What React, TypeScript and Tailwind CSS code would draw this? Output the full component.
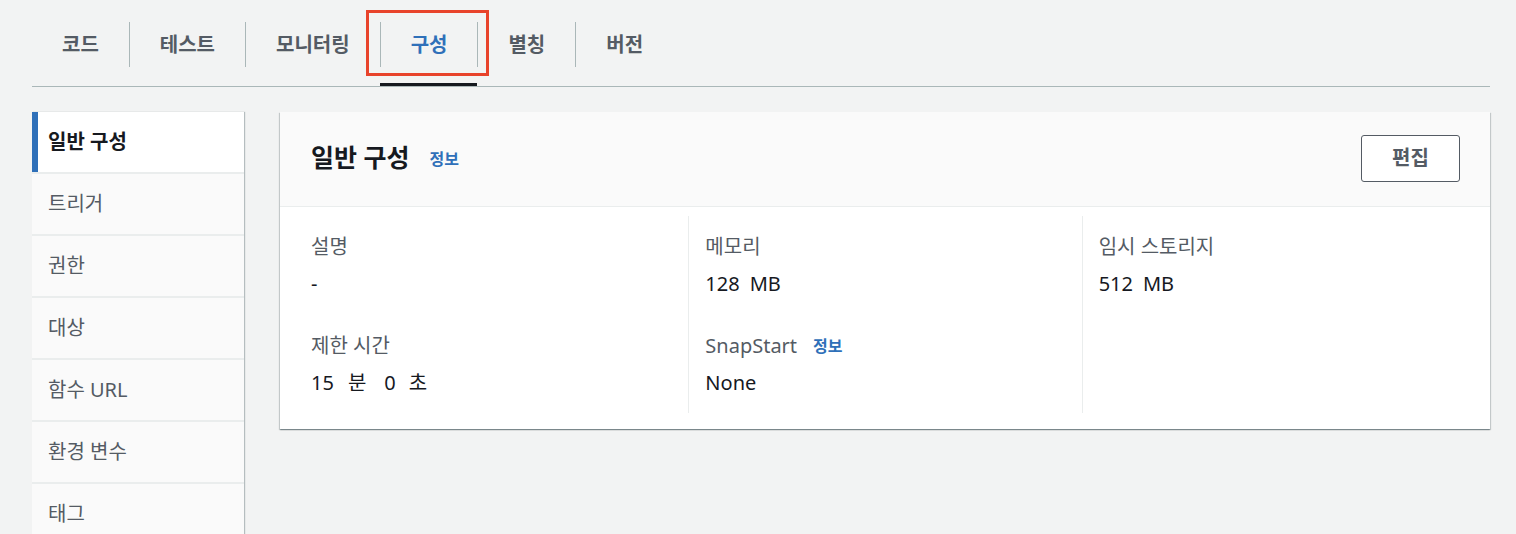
import React from 'react'

const tabs = ['코드', '테스트', '모니터링', '구성', '별칭', '버전']
const sideItems = ['일반 구성', '트리거', '권한', '대상', '함수 URL', '환경 변수', '태그']

function InfoLink({ className = '' }: { className?: string }) {
  return <span className={`text-[16px] font-bold text-[#2f70b9] ${className}`}>정보</span>
}

function Field({ label, children, info }: { label: string; children: React.ReactNode; info?: boolean }) {
  return (
    <div className="flex flex-col">
      <div className="flex items-center h-[24px] text-[20px] text-[#545b64]">
        {label}
        {info && <InfoLink className="ml-[16px]" />}
      </div>
      <div className="mt-[13px] h-[24px] flex items-center text-[20px] text-[#16191f]">{children}</div>
    </div>
  )
}

export default function App() {
  return (
    <div className="min-h-[534px] bg-[#f2f3f3] font-['Noto_Sans','Noto_Sans_CJK_KR',sans-serif] overflow-hidden">
      {/* tabs */}
      <div className="ml-[32px] mr-[26px] flex border-b border-[#aab7b8] h-[87px]">
        {tabs.map((t, i) => {
          const active = t === '구성'
          return (
            <div
              key={t}
              className={`relative h-[86px] pt-[6px] flex items-center border-b-[3px] ${active ? 'border-[#16191f]' : 'border-transparent'}`}
            >
              <div
                className={`h-[45px] flex items-center px-[30px] text-[20px] font-bold ${i > 0 ? 'border-l border-[#aab7b8]' : ''} ${active ? 'text-[#2f70b9]' : 'text-[#545b64]'}`}
              >
                {t}
              </div>
              {active && (
                <div className="absolute left-[-14px] right-[-12px] top-[10px] h-[66px] border-[3px] border-[#e8432b] pointer-events-none" />
              )}
            </div>
          )
        })}
      </div>

      <div className="flex mt-[25px] ml-[32px] mr-[26px] gap-[36px] items-start">
        {/* side nav */}
        <div className="w-[212px] shrink-0 flex flex-col gap-[2px] bg-[#eaeded] shadow-[1px_0_1px_0_rgba(0,28,36,0.25)]">
          {sideItems.map((s, i) => (
            <div
              key={s}
              className={`h-[60px] flex items-center text-[20px] ${i === 0 ? 'bg-white font-bold text-[#16191f] border-l-[6px] border-[#2f70b9] pl-[10px]' : 'bg-[#fafafa] text-[#545b64] pl-[16px]'}`}
            >
              {s}
            </div>
          ))}
        </div>

        {/* card */}
        <div className="flex-1 bg-white shadow-[0_1px_1px_0_rgba(0,28,36,0.3),1px_1px_1px_0_rgba(0,28,36,0.15),-1px_1px_1px_0_rgba(0,28,36,0.15)]">
          <div className="h-[95px] bg-[#fafafa] border-b border-[#eaeded] flex items-center justify-between pl-[31px] pr-[30px]">
            <div className="flex items-center mt-[-2px]">
              <span className="text-[25px] font-bold text-[#16191f]">일반 구성</span>
              <InfoLink className="ml-[20px] mt-[2px]" />
            </div>
            <button className="w-[99px] h-[47px] mt-[-2px] border border-[#545b64] rounded-[3px] bg-white text-[20px] font-bold text-[#545b64]">
              편집
            </button>
          </div>
          <div className="grid grid-cols-3 px-[15px] pt-[9px] pb-[16px]">
            <div className="pl-[16px] pt-[19px] pb-[18px] flex flex-col gap-[38px]">
              <Field label="설명">-</Field>
              <Field label="제한 시간">
                15<span className="ml-[14px]">분</span>
                <span className="ml-[18px]">0</span>
                <span className="ml-[13px]">초</span>
              </Field>
            </div>
            <div className="border-l border-[#eaeded] pl-[16px] pt-[19px] pb-[18px] flex flex-col gap-[38px]">
              <Field label="메모리">
                128<span className="ml-[10px]">MB</span>
              </Field>
              <Field label="SnapStart" info>
                None
              </Field>
            </div>
            <div className="border-l border-[#eaeded] pl-[16px] pt-[19px] pb-[18px] flex flex-col gap-[38px]">
              <Field label="임시 스토리지">
                512<span className="ml-[10px]">MB</span>
              </Field>
            </div>
          </div>
        </div>
      </div>
    </div>
  )
}
